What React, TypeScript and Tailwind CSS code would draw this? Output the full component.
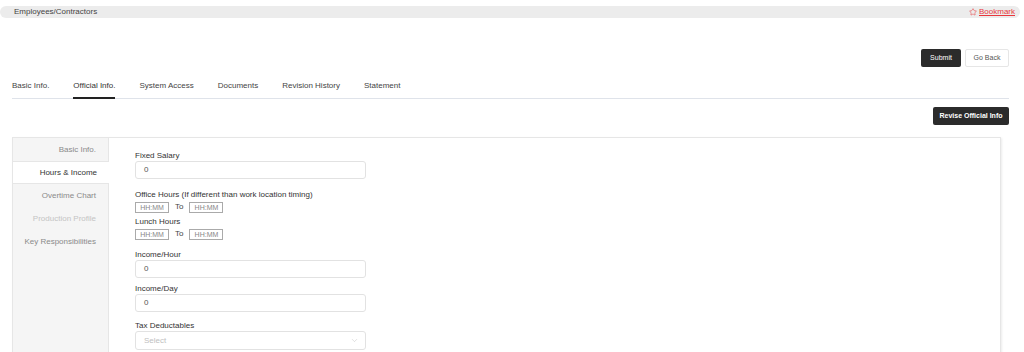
import { ChevronDown, Star } from "lucide-react";

const tabs = ["Basic Info.", "Official Info.", "System Access", "Documents", "Revision History", "Statement"];

const sideItems = [
  { label: "Basic Info.", cls: "text-[#8a8a8a]" },
  { label: "Hours & Income", cls: "text-[#333]" },
  { label: "Overtime Chart", cls: "text-[#8a8a8a]" },
  { label: "Production Profile", cls: "text-[#c4c4c4]" },
  { label: "Key Responsibilities", cls: "text-[#8a8a8a]" },
];

function TextInput({ value }: { value: string }) {
  return (
    <div className="w-[231px] h-[18px] border border-[#e2e2e2] rounded-[3px] flex items-center pl-[8px] text-[8px] text-[#555]">
      {value}
    </div>
  );
}

function TimeRange() {
  return (
    <div className="mt-[2px] flex items-start">
      <div className="w-[34px] h-[11px] border border-[#aaa] flex items-center justify-center text-[7px] leading-none text-[#888]">
        HH:MM
      </div>
      <span className="ml-[6px] mr-[6px] text-[8px] leading-none text-[#444] mt-[1px]">To</span>
      <div className="w-[34px] h-[11px] border border-[#aaa] flex items-center justify-center text-[7px] leading-none text-[#888]">
        HH:MM
      </div>
    </div>
  );
}

export default function App() {
  return (
    <div className="w-[1024px] h-[352px] overflow-hidden bg-white text-[8px] text-[#333]" style={{ fontFamily: '"Liberation Sans", Arial, sans-serif' }}>
      {/* breadcrumb bar */}
      <div className="mt-[6px] mr-[4px] h-[12px] rounded-full bg-[#ececec] flex items-center justify-between pl-[14px] pr-[5px]">
        <span className="text-[#444]">Employees/Contractors</span>
        <a className="flex items-center gap-[2px] text-[#e8383d] underline">
          <Star size={8} strokeWidth={1.6} />
          <span>Bookmark</span>
        </a>
      </div>

      <div className="px-[12px] pr-[15px]">
        {/* top buttons */}
        <div className="mt-[31px] flex justify-end gap-[4px]">
          <button className="h-[18px] w-[40px] rounded-[2px] bg-[#2b2b2b] text-white text-[7px]">Submit</button>
          <button className="h-[18px] w-[44px] rounded-[2px] border border-[#e6e6e6] bg-white text-[#555] text-[7px]">Go Back</button>
        </div>

        {/* tabs */}
        <div className="mt-[14px] flex gap-[24px] border-b border-[#dfe3ea]">
          {tabs.map((t) => (
            <div key={t} className={"pb-[6px] leading-[10px] " + (t === "Official Info." ? "border-b-2 border-[#222] -mb-px text-[#333]" : "text-[#444]")}>
              {t}
            </div>
          ))}
        </div>

        <div className="mt-[8px] flex justify-end">
          <button className="h-[18px] w-[76px] rounded-[2px] bg-[#2b2b2b] text-white text-[7px] font-bold">Revise Official Info</button>
        </div>
      </div>

      {/* card */}
      <div className="mt-[12px] ml-[12px] w-[989px] border border-[#e6e6e6] shadow-[1px_1px_2px_rgba(0,0,0,0.08)] flex h-[260px]">
        <div className="w-[96px] bg-[#f5f5f5] border-r border-[#e6e6e6]">
          {sideItems.map((s) => (
            <div
              key={s.label}
              className={
                "h-[23px] flex items-center justify-end pr-[12px] " +
                s.cls +
                (s.label === "Hours & Income" ? " bg-white border-y border-[#e6e6e6] -mr-px" : "")
              }
            >
              {s.label}
            </div>
          ))}
        </div>

        <div className="pl-[26px] pt-[13px] flex flex-col">
          <div className="leading-[10px] text-[#333]">Fixed Salary</div>
          <TextInput value="0" />

          <div className="mt-[11px] leading-[10px] text-[#333]">
            Office Hours (If different than work location timing)
          </div>
          <TimeRange />

          <div className="mt-[4px] leading-[10px] text-[#333]">Lunch Hours</div>
          <TimeRange />

          <div className="mt-[10px] leading-[10px] text-[#333]">Income/Hour</div>
          <TextInput value="0" />

          <div className="mt-[6px] leading-[10px] text-[#333]">Income/Day</div>
          <TextInput value="0" />

          <div className="mt-[9px] leading-[10px] text-[#333]">Tax Deductables</div>
          <div className="w-[231px] h-[19px] border border-[#e2e2e2] rounded-[3px] flex items-center justify-between pl-[8px] pr-[6px] text-[8px] text-[#c0c0c0]">
            <span>Select</span>
            <ChevronDown size={9} strokeWidth={1.2} className="text-[#bbb]" />
          </div>
        </div>
      </div>
    </div>
  );
}
